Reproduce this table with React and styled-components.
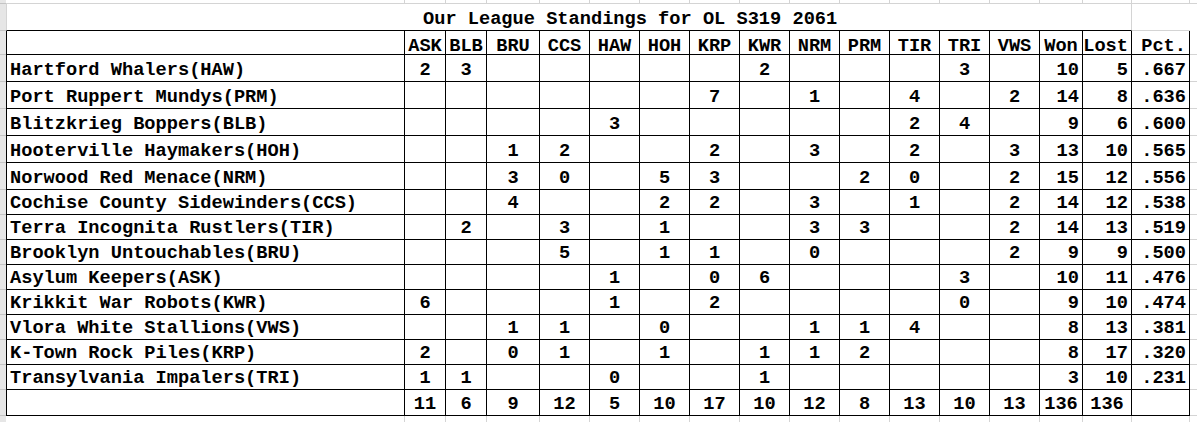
import React from "react";
import styled, { createGlobalStyle } from "styled-components";

const GlobalStyle = createGlobalStyle`
  html, body {
    margin: 0;
    background: #fff;
  }
  body {
    font-family: "Liberation Mono", "Courier New", monospace;
    font-weight: bold;
    font-size: 14pt;
    color: #000;
  }
`;

const GRID = "#d4d4d4";
const INK = "#000";
const COLS =
  "6px 399px 41px 41px 53px repeat(10, 50px) 43px 49px 58px 1fr";

const TEAMS = [
  "ASK", "BLB", "BRU", "CCS", "HAW", "HOH", "KRP",
  "KWR", "NRM", "PRM", "TIR", "TRI", "VWS",
];

const standings = [
  { name: "Hartford Whalers(HAW)", g: { ASK: 2, BLB: 3, KWR: 2, TRI: 3 }, w: 10, l: 5, pct: ".667" },
  { name: "Port Ruppert Mundys(PRM)", g: { KRP: 7, NRM: 1, TIR: 4, VWS: 2 }, w: 14, l: 8, pct: ".636" },
  { name: "Blitzkrieg Boppers(BLB)", g: { HAW: 3, TIR: 2, TRI: 4 }, w: 9, l: 6, pct: ".600" },
  { name: "Hooterville Haymakers(HOH)", g: { BRU: 1, CCS: 2, KRP: 2, NRM: 3, TIR: 2, VWS: 3 }, w: 13, l: 10, pct: ".565" },
  { name: "Norwood Red Menace(NRM)", g: { BRU: 3, CCS: 0, HOH: 5, KRP: 3, PRM: 2, TIR: 0, VWS: 2 }, w: 15, l: 12, pct: ".556" },
  { name: "Cochise County Sidewinders(CCS)", g: { BRU: 4, HOH: 2, KRP: 2, NRM: 3, TIR: 1, VWS: 2 }, w: 14, l: 12, pct: ".538" },
  { name: "Terra Incognita Rustlers(TIR)", g: { BLB: 2, CCS: 3, HOH: 1, NRM: 3, PRM: 3, VWS: 2 }, w: 14, l: 13, pct: ".519" },
  { name: "Brooklyn Untouchables(BRU)", g: { CCS: 5, HOH: 1, KRP: 1, NRM: 0, VWS: 2 }, w: 9, l: 9, pct: ".500" },
  { name: "Asylum Keepers(ASK)", g: { HAW: 1, KRP: 0, KWR: 6, TRI: 3 }, w: 10, l: 11, pct: ".476" },
  { name: "Krikkit War Robots(KWR)", g: { ASK: 6, HAW: 1, KRP: 2, TRI: 0 }, w: 9, l: 10, pct: ".474" },
  { name: "Vlora White Stallions(VWS)", g: { BRU: 1, CCS: 1, HOH: 0, NRM: 1, PRM: 1, TIR: 4 }, w: 8, l: 13, pct: ".381" },
  { name: "K-Town Rock Piles(KRP)", g: { ASK: 2, BRU: 0, CCS: 1, HOH: 1, KWR: 1, NRM: 1, PRM: 2 }, w: 8, l: 17, pct: ".320" },
  { name: "Transylvania Impalers(TRI)", g: { ASK: 1, BLB: 1, HAW: 0, KWR: 1 }, w: 3, l: 10, pct: ".231" },
];

const Sheet = styled.div`
  display: flex;
  flex-direction: column;
  width: 1197px;
  height: 422px;
  overflow: hidden;
`;

const Row = styled.div`
  display: grid;
  grid-template-columns: ${COLS};
  height: ${(p) => p.$h}px;
  flex: ${(p) => (p.$fill ? "1 1 auto" : "0 0 auto")};
`;

// excel row header strip on the far left
const RowHead = styled.div`
  background: #e6e6e6;
  border-bottom: ${(p) => (p.$open ? "none" : "1px solid #c4c4c4")};
`;

const GridCell = styled.div`
  border-right: 1px solid ${GRID};
  border-bottom: ${(p) => (p.$open ? "none" : `1px solid ${GRID}`)};
`;

const Edge = styled.div`
  border-bottom: ${(p) => (p.$open ? "none" : `1px solid ${GRID}`)};
`;

const Title = styled.div`
  grid-column: 2 / 18;
  display: flex;
  align-items: flex-end;
  padding-left: 416px;
  line-height: 21px;
  white-space: nowrap;
  border-left: 1px solid ${GRID};
  border-right: 1px solid ${GRID};
  border-bottom: 1px solid ${INK};
`;

const Cell = styled.div`
  display: flex;
  align-items: ${(p) => (p.$head ? "flex-start" : "flex-end")};
  justify-content: ${(p) =>
    p.$align === "left" ? "flex-start" : p.$align === "right" ? "flex-end" : "center"};
  padding: ${(p) => (p.$head ? "8px" : "0")} ${(p) => (p.$align === "right" ? "3px" : "0")} 0
    ${(p) => (p.$align === "left" ? "3px" : "0")};
  line-height: ${(p) => (p.$head ? "14px" : "21px")};
  white-space: nowrap;
  border-left: ${(p) => (p.$first ? `1px solid ${INK}` : "none")};
  border-right: 1px solid ${INK};
  border-bottom: 1px solid ${INK};
`;

const ghostCells = (open) =>
  Array.from({ length: 17 }, (_, i) => <GridCell key={i} $open={open} />);

const App = () => {
  const totals = TEAMS.map((t) =>
    standings.reduce((sum, r) => sum + (r.g[t] ?? 0), 0)
  );
  const wins = standings.reduce((s, r) => s + r.w, 0);
  const losses = standings.reduce((s, r) => s + r.l, 0);

  return (
    <>
      <GlobalStyle />
      <Sheet>
        <Row $h={4}>
          <RowHead />
          {ghostCells(false)}
          <Edge />
        </Row>

        <Row $h={27}>
          <RowHead />
          <Title>Our League Standings for OL S319 2061</Title>
          <Edge />
        </Row>

        <Row $h={24}>
          <RowHead />
          <Cell $head $first />
          {TEAMS.map((t) => (
            <Cell key={t} $head>
              {t}
            </Cell>
          ))}
          <Cell $head>Won</Cell>
          <Cell $head $align="right">Lost</Cell>
          <Cell $head $align="right">Pct.</Cell>
          <Edge />
        </Row>

        {standings.map((r, i) => (
          <Row key={r.name} $h={i < 5 ? 27 : 25}>
            <RowHead />
            <Cell $first $align="left">
              {r.name}
            </Cell>
            {TEAMS.map((t) => (
              <Cell key={t}>{r.g[t] ?? ""}</Cell>
            ))}
            <Cell $align="right">{r.w}</Cell>
            <Cell $align="right">{r.l}</Cell>
            <Cell $align="right">{r.pct}</Cell>
            <Edge />
          </Row>
        ))}

        <Row $h={26}>
          <RowHead />
          <Cell $first />
          {totals.map((n, i) => (
            <Cell key={TEAMS[i]}>{n}</Cell>
          ))}
          <Cell>{wins}</Cell>
          <Cell>{losses}</Cell>
          <Cell />
          <Edge />
        </Row>

        <Row $h={6} $fill>
          <RowHead $open />
          {ghostCells(true)}
          <Edge $open />
        </Row>
      </Sheet>
    </>
  );
};

export default App;
